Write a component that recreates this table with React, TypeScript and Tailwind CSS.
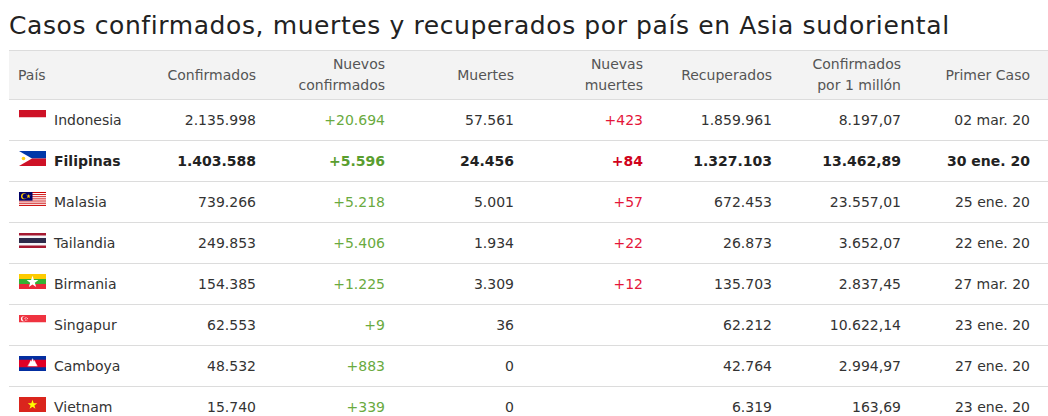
import type { ReactNode } from "react";

const Star = ({ cx, cy, r, fill }: { cx: number; cy: number; r: number; fill: string }) => {
  const pts: string[] = [];
  for (let i = 0; i < 10; i++) {
    const rad = i % 2 === 0 ? r : r * 0.4;
    const a = (Math.PI / 5) * i - Math.PI / 2;
    pts.push(`${cx + rad * Math.cos(a)},${cy + rad * Math.sin(a)}`);
  }
  return <polygon points={pts.join(" ")} fill={fill} />;
};

const Flag = ({ children }: { children: ReactNode }) => (
  <svg width="27" height="15" viewBox="0 0 27 15" className="shrink-0">
    {children}
  </svg>
);

const flags: Record<string, ReactNode> = {
  Indonesia: (
    <Flag>
      <rect width="27" height="7.5" fill="#ce1126" />
      <rect y="7.5" width="27" height="7.5" fill="#fff" />
    </Flag>
  ),
  Filipinas: (
    <Flag>
      <rect width="27" height="7.5" fill="#0038a8" />
      <rect y="7.5" width="27" height="7.5" fill="#ce1126" />
      <polygon points="0,0 13,7.5 0,15" fill="#fff" />
      <circle cx="4.5" cy="7.5" r="1.8" fill="#fcd116" />
    </Flag>
  ),
  Malasia: (
    <Flag>
      {Array.from({ length: 14 }).map((_, i) => (
        <rect key={i} y={(i * 15) / 14} width="27" height={15 / 14 + 0.05} fill={i % 2 === 0 ? "#cc0001" : "#fff"} />
      ))}
      <rect width="13.5" height="8.6" fill="#010066" />
      <circle cx="5" cy="4.3" r="3" fill="#fc0" />
      <circle cx="6" cy="4.3" r="2.5" fill="#010066" />
      <Star cx={9.5} cy={4.3} r={2.3} fill="#fc0" />
    </Flag>
  ),
  Tailandia: (
    <Flag>
      <rect width="27" height="15" fill="#a51931" />
      <rect y="2.5" width="27" height="10" fill="#f4f5f8" />
      <rect y="5" width="27" height="5" fill="#2d2a4a" />
    </Flag>
  ),
  Birmania: (
    <Flag>
      <rect width="27" height="5" fill="#fecb00" />
      <rect y="5" width="27" height="5" fill="#34b233" />
      <rect y="10" width="27" height="5" fill="#ea2839" />
      <Star cx={13.5} cy={8} r={6.2} fill="#fff" />
    </Flag>
  ),
  Singapur: (
    <Flag>
      <rect width="27" height="7.5" fill="#ef3340" />
      <rect y="7.5" width="27" height="7.5" fill="#fff" />
      <circle cx="4.5" cy="3.75" r="2.6" fill="#fff" />
      <circle cx="5.6" cy="3.75" r="2.4" fill="#ef3340" />
      <circle cx="7" cy="2.6" r="0.5" fill="#fff" />
      <circle cx="8.3" cy="3.6" r="0.5" fill="#fff" />
      <circle cx="7.8" cy="5" r="0.5" fill="#fff" />
      <circle cx="6.4" cy="5" r="0.5" fill="#fff" />
      <circle cx="6" cy="3.6" r="0.5" fill="#fff" />
    </Flag>
  ),
  Camboya: (
    <Flag>
      <rect width="27" height="15" fill="#032ea1" />
      <rect y="3.75" width="27" height="7.5" fill="#e00025" />
      <path
        d="M8.5 10.2h10v-0.8h-0.8v-1.6h-0.8v-1.2h-0.6v-1.4h-0.6v-1h-0.6v1h-0.6v-1.6h-0.6v-1h-0.6v1h-0.6v1.6h-0.6v-1h-0.6v1h-0.6v1.4h-0.6v1.2h-0.8v1.6h-0.8z"
        fill="#fff"
      />
    </Flag>
  ),
  Vietnam: (
    <Flag>
      <rect width="27" height="15" fill="#da251d" />
      <Star cx={13.5} cy={7.8} r={5} fill="#ff0" />
    </Flag>
  ),
};

type Row = {
  country: string;
  confirmed: string;
  newConfirmed: string;
  deaths: string;
  newDeaths: string;
  recovered: string;
  perMillion: string;
  firstCase: string;
  bold?: boolean;
};

const rows: Row[] = [
  { country: "Indonesia", confirmed: "2.135.998", newConfirmed: "+20.694", deaths: "57.561", newDeaths: "+423", recovered: "1.859.961", perMillion: "8.197,07", firstCase: "02 mar. 20" },
  { country: "Filipinas", confirmed: "1.403.588", newConfirmed: "+5.596", deaths: "24.456", newDeaths: "+84", recovered: "1.327.103", perMillion: "13.462,89", firstCase: "30 ene. 20", bold: true },
  { country: "Malasia", confirmed: "739.266", newConfirmed: "+5.218", deaths: "5.001", newDeaths: "+57", recovered: "672.453", perMillion: "23.557,01", firstCase: "25 ene. 20" },
  { country: "Tailandia", confirmed: "249.853", newConfirmed: "+5.406", deaths: "1.934", newDeaths: "+22", recovered: "26.873", perMillion: "3.652,07", firstCase: "22 ene. 20" },
  { country: "Birmania", confirmed: "154.385", newConfirmed: "+1.225", deaths: "3.309", newDeaths: "+12", recovered: "135.703", perMillion: "2.837,45", firstCase: "27 mar. 20" },
  { country: "Singapur", confirmed: "62.553", newConfirmed: "+9", deaths: "36", newDeaths: "", recovered: "62.212", perMillion: "10.622,14", firstCase: "23 ene. 20" },
  { country: "Camboya", confirmed: "48.532", newConfirmed: "+883", deaths: "0", newDeaths: "", recovered: "42.764", perMillion: "2.994,97", firstCase: "27 ene. 20" },
  { country: "Vietnam", confirmed: "15.740", newConfirmed: "+339", deaths: "0", newDeaths: "", recovered: "6.319", perMillion: "163,69", firstCase: "23 ene. 20" },
];

const headers = ["Confirmados", "Nuevos\nconfirmados", "Muertes", "Nuevas\nmuertes", "Recuperados", "Confirmados\npor 1 millón", "Primer Caso"];

const grid = "grid grid-cols-[128px_repeat(7,129px)_1fr]";

export default function App() {
  return (
    <div className="bg-white pl-[9px] font-['DejaVu_Sans',sans-serif] text-[#333] w-[1048px] h-[416px] overflow-hidden">
      <h2 className="pt-[9px] h-[50px] text-[25px] leading-[34px] text-[#222] tracking-[0.6px] whitespace-nowrap">
        Casos confirmados, muertes y recuperados por país en Asia sudoriental
      </h2>
      <div className="w-[1039px]">
        <div className={`${grid} h-[50px] bg-[#f3f3f3] border-t border-b border-[#dcdcdc] text-[14px] leading-[21px] text-[#555]`}>
          <div className="flex items-center pl-[9px]">País</div>
          {headers.map((h) => (
            <div key={h} className="flex items-center justify-end pr-[10px] text-right whitespace-pre-line">
              {h}
            </div>
          ))}
          <div />
        </div>
        {rows.map((r) => (
          <div
            key={r.country}
            className={`${grid} h-[41px] border-b border-[#dcdcdc] text-[14px] ${r.bold ? "font-bold text-[#222]" : ""}`}
          >
            <div className="flex items-center pl-[10px] gap-[8px]">
              <span className="-mt-[5px]">{flags[r.country]}</span>
              <span>{r.country}</span>
            </div>
            <div className="flex items-center justify-end pr-[10px]">{r.confirmed}</div>
            <div className={`flex items-center justify-end pr-[10px] ${r.bold ? "text-[#5a9e2f]" : "text-[#6aaa40]"}`}>{r.newConfirmed}</div>
            <div className="flex items-center justify-end pr-[10px]">{r.deaths}</div>
            <div className={`flex items-center justify-end pr-[10px] ${r.bold ? "text-[#d0021b]" : "text-[#e4163a]"}`}>{r.newDeaths}</div>
            <div className="flex items-center justify-end pr-[10px]">{r.recovered}</div>
            <div className="flex items-center justify-end pr-[10px]">{r.perMillion}</div>
            <div className="flex items-center justify-end pr-[10px]">{r.firstCase}</div>
            <div />
          </div>
        ))}
      </div>
    </div>
  );
}
